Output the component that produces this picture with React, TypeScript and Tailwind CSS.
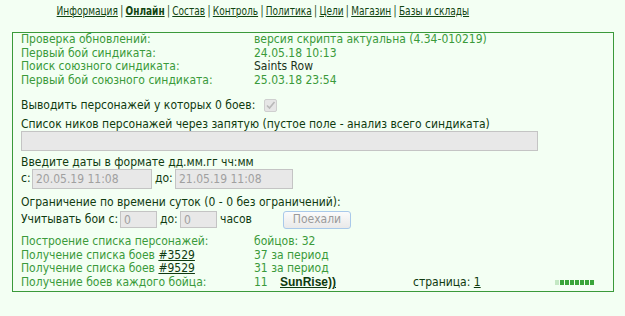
const font = { fontFamily: '"DejaVu Sans Condensed", "DejaVu Sans", sans-serif' };

const navLinks = ["Информация", "Онлайн", "Состав", "Контроль", "Политика", "Цели", "Магазин", "Базы и склады"];

function Field({ value, w }: { value: string; w: string }) {
  return (
    <input
      disabled
      defaultValue={value}
      className={`${w} h-[20px] border border-[#c4c4c4] bg-[#e8e8e8] px-[3px] text-[12px] text-[#a0a0a0] outline-none`}
      style={font}
    />
  );
}

function Progress() {
  return (
    <div className="flex h-[5px] items-stretch gap-[1px]">
      <span className="w-[4px] bg-[#c4e8c4]" />
      {[0, 1, 2, 3, 4, 5, 6].map((i) => (
        <span key={i} className="w-[4px] bg-[#3aa53a]" />
      ))}
    </div>
  );
}

export default function App() {
  return (
    <div className="h-[316px] w-[625px] bg-[#f3fff3] text-[12px]" style={font}>
      {/* меню (узкий шрифт — сжимаем по горизонтали) */}
      <div className="flex justify-center pr-[100px] pt-[3px] text-[13px] leading-[16px] text-[#114411]">
        <div className="shrink-0 origin-center scale-x-[0.77] whitespace-nowrap">
          {navLinks.map((l, i) => (
            <span key={l}>
              {i > 0 && <span className="px-[3px]">|</span>}
              <a className={`underline ${l === "Онлайн" ? "font-bold" : ""}`}>{l}</a>
            </span>
          ))}
        </div>
      </div>

      <div className="ml-[12px] mt-[13px] w-[602px] border border-[#3a9a3a] px-[8px] pb-[1px] leading-[13.7px]">
        <div className="grid grid-cols-[233px_1fr] text-[#3a9a3a]">
          <span>Проверка обновлений:</span>
          <span>версия скрипта актуальна (4.34-010219)</span>
          <span>Первый бой синдиката:</span>
          <span>24.05.18 10:13</span>
          <span>Поиск союзного синдиката:</span>
          <span className="text-[#1a331a]">Saints Row</span>
          <span>Первый бой союзного синдиката:</span>
          <span>25.03.18 23:54</span>
        </div>

        <div className="mt-[11px] flex h-[14px] items-center text-[#0f3a0f]">
          <span>Выводить персонажей у которых 0 боев:</span>
          <span className="ml-[9px] flex h-[13px] w-[13px] items-center justify-center rounded-[2px] border border-[#cfcfcf] bg-[#e6e6e6]">
            <svg width="11" height="11" viewBox="0 0 11 11">
              <path d="M2 5.5 L4.5 8 L9.5 2" fill="none" stroke="#b8b8b8" strokeWidth="1.6" />
            </svg>
          </span>
        </div>

        <div className="mt-[5px] text-[#0f3a0f]">Список ников персонажей через запятую (пустое поле - анализ всего синдиката)</div>
        <div className="mt-[-1px]">
          <Field value="" w="w-[517px]" />
        </div>

        <div className="mt-[5px] text-[#0f3a0f]">Введите даты в формате дд.мм.гг чч:мм</div>
        <div className="flex items-center text-[#0f3a0f]">
          <span className="w-[11px]">с:</span>
          <Field value="20.05.19 11:08" w="w-[120px]" />
          <span className="ml-[3px] w-[20px]">до:</span>
          <Field value="21.05.19 11:08" w="w-[118px]" />
        </div>

        <div className="mt-[7px] text-[#0f3a0f]">Ограничение по времени суток (0 - 0 без ограничений):</div>
        <div className="mt-[1px] flex h-[18px] items-center text-[#0f3a0f]">
          <span className="w-[99px]">Учитывать бои с:</span>
          <input
            disabled
            defaultValue="0"
            className="h-[17px] w-[37px] border border-[#c4c4c4] bg-[#e8e8e8] px-[3px] text-[12px] text-[#a0a0a0]"
            style={font}
          />
          <span className="ml-[3px] w-[20px]">до:</span>
          <input
            disabled
            defaultValue="0"
            className="h-[17px] w-[37px] border border-[#c4c4c4] bg-[#e8e8e8] px-[3px] text-[12px] text-[#a0a0a0]"
            style={font}
          />
          <span className="ml-[3px] w-[63px]">часов</span>
          <button
            disabled
            className="h-[18px] w-[68px] rounded-[3px] border border-[#a9c9ea] bg-gradient-to-b from-[#fbfbfb] to-[#e9e9e9] text-[12px] text-[#9a9a9a]"
            style={font}
          >
            Поехали
          </button>
        </div>

        <div className="mt-[6px] grid grid-cols-[233px_1fr] text-[#3a9a3a]">
          <span>Построение списка персонажей:</span>
          <span>бойцов: 32</span>
          <span>
            Получение списка боев <a className="text-[#0f3a0f] underline">#3529</a>
          </span>
          <span>37 за период</span>
          <span>
            Получение списка боев <a className="text-[#0f3a0f] underline">#9529</a>
          </span>
          <span>31 за период</span>
          <span>Получение боев каждого бойца:</span>
          <span className="flex items-center">
            <span className="w-[26px]">11</span>
            <a className="w-[133px] font-bold text-[#0f3a0f] underline" style={{ fontFamily: '"Liberation Sans", sans-serif' }}>
              SunRise))
            </a>
            <span className="w-[142px] text-[#0f3a0f]">
              страница: <a className="underline">1</a>
            </span>
            <Progress />
          </span>
        </div>
      </div>
    </div>
  );
}
